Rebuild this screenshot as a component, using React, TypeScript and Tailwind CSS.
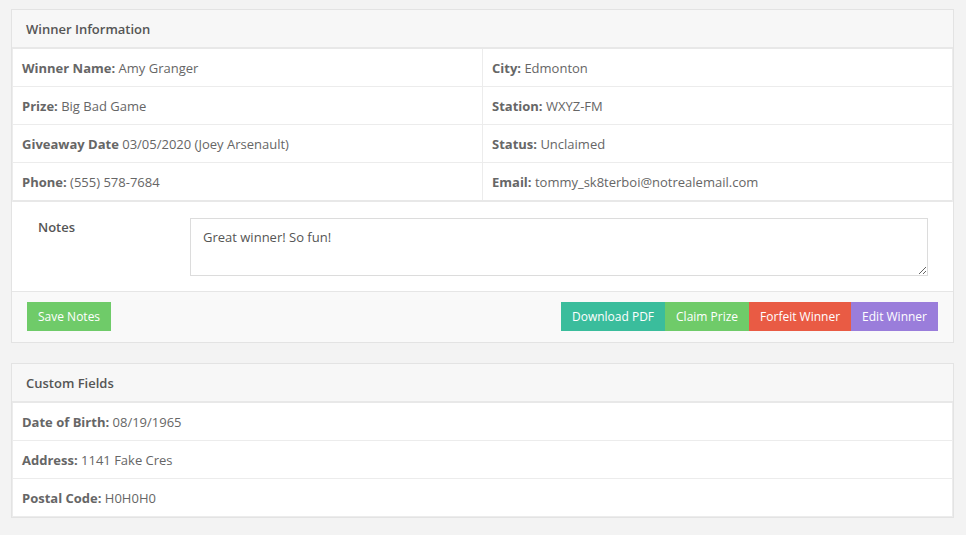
import React from "react";

const Row = ({ children, last }: { children: React.ReactNode; last?: boolean }) => (
  <div className={`flex ${last ? "" : "border-b border-[#ececec]"}`}>{children}</div>
);

const Cell = ({ label, value, right }: { label: string; value: string; right?: boolean }) => (
  <div className={`flex-1 h-[37px] flex items-center px-[9px] ${right ? "border-l border-[#ececec]" : ""}`}>
    <span className="font-bold text-[#666]">{label}</span>
    <span className="whitespace-pre text-[#666]">{" " + value}</span>
  </div>
);

export default function App() {
  return (
    <div
      className="min-h-[535px] bg-[#f3f3f3] pl-[11px] pr-[12px] pt-[9px] text-[13px] leading-[20px] text-[#666]"
      style={{ fontFamily: '"Open Sans", "Noto Sans", sans-serif' }}
    >
      <div className="border border-[#e3e3e3] bg-white">
        <div className="h-[39px] bg-[#f7f7f7] border-b-2 border-[#e8e8e8] flex items-center pl-[14px] text-[#555] font-semibold">
          Winner Information
        </div>
        <div className="border-x border-[#ececec]">
          <Row>
            <Cell label="Winner Name:" value="Amy Granger" />
            <Cell right label="City:" value="Edmonton" />
          </Row>
          <Row>
            <Cell label="Prize:" value="Big Bad Game" />
            <Cell right label="Station:" value="WXYZ-FM" />
          </Row>
          <Row>
            <Cell label="Giveaway Date" value="03/05/2020 (Joey Arsenault)" />
            <Cell right label="Status:" value="Unclaimed" />
          </Row>
          <div className="flex border-b-2 border-[#e8e8e8]">
            <Cell label="Phone:" value="(555) 578-7684" />
            <Cell right label="Email:" value="tommy_sk8terboi@notrealemail.com" />
          </div>
        </div>
        <div className="flex pt-[16px] pb-[15px] pl-[26px] pr-[25px] border-b border-[#e6e6e6]">
          <div className="w-[152px] font-semibold text-[#555] -mt-[1px]">Notes</div>
          <textarea
            className="flex-1 h-[58px] border border-[#dcdcdc] px-[12px] py-[8px] text-[13px] text-[#555] outline-none resize-y"
            style={{ fontFamily: '"Open Sans", "Noto Sans", sans-serif' }}
            defaultValue="Great winner! So fun!"
          />
        </div>
        <div className="bg-[#f9f9f9] flex items-center justify-between pl-[15px] pr-[15px] pt-[10px] pb-[11px] text-[12px] text-white">
          <button className="h-[29px] px-[11px] bg-[#6fcb69]">Save Notes</button>
          <div className="flex">
            <button className="h-[29px] px-[11px] bg-[#3abd9c]">Download PDF</button>
            <button className="h-[29px] px-[11px] bg-[#6fcb69]">Claim Prize</button>
            <button className="h-[29px] px-[11px] bg-[#e95b44]">Forfeit Winner</button>
            <button className="h-[29px] px-[11px] bg-[#9a7ddb]">Edit Winner</button>
          </div>
        </div>
      </div>

      <div className="mt-[20px] border border-[#e3e3e3] bg-white">
        <div className="h-[39px] bg-[#f7f7f7] border-b-2 border-[#e8e8e8] flex items-center pl-[14px] text-[#555] font-semibold">
          Custom Fields
        </div>
        <div className="border-x border-b border-[#ececec]">
          <Row>
            <Cell label="Date of Birth:" value="08/19/1965" />
          </Row>
          <Row>
            <Cell label="Address:" value="1141 Fake Cres" />
          </Row>
          <Row last>
            <Cell label="Postal Code:" value="H0H0H0" />
          </Row>
        </div>
      </div>
    </div>
  );
}
